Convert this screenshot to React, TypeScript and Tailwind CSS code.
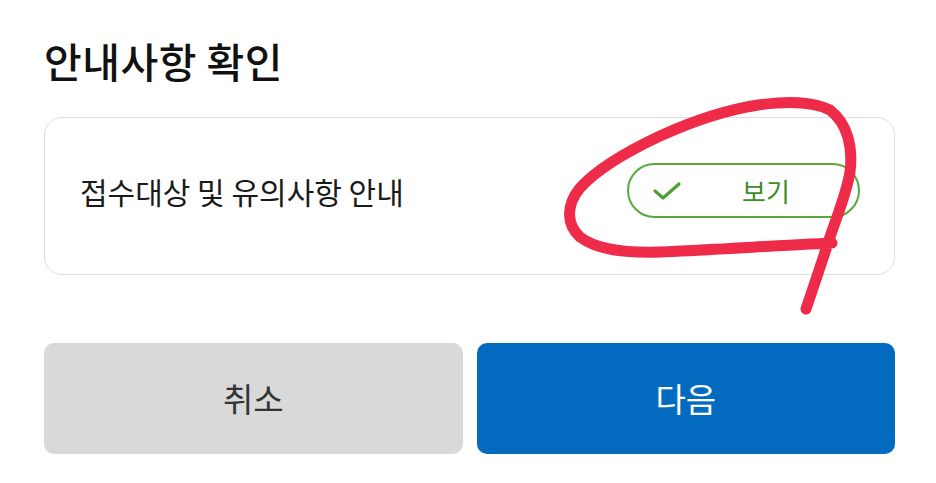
export default function App() {
  return (
    <div
      className="relative w-[936px] h-[483px] bg-white overflow-hidden pl-[44px] pr-[41px]"
      style={{ fontFamily: '"Noto Sans CJK KR", "Noto Sans", sans-serif' }}
    >
      {/* Title */}
      <h1 className="pt-[31px] text-[41px] leading-[58px] font-medium text-[#111111] tracking-[0.5px]">
        안내사항 확인
      </h1>

      {/* Notice card */}
      <div className="mt-[28px] h-[158px] rounded-[18px] border-[1.5px] border-[#d6dee8] flex items-center justify-between pl-[35px] pr-[34px] pb-[11px]">
        <span className="text-[30px] leading-none text-[#1a1a1a]">접수대상 및 유의사항 안내</span>
        <button className="w-[233px] h-[55px] rounded-full border-2 border-[#58a83c] flex items-center pl-[23px] text-[#3d8c2c]">
          <svg width="30" height="20" viewBox="0 0 30 20" fill="none">
            <path
              d="M3 10 L11 17 L27 3"
              stroke="#4aa030"
              strokeWidth="3.2"
              strokeLinecap="round"
              strokeLinejoin="round"
            />
          </svg>
          <span className="ml-[60px] text-[26px] leading-none">보기</span>
        </button>
      </div>

      {/* Actions */}
      <div className="mt-[68px] grid grid-cols-2 gap-[14px]">
        <button className="h-[111px] rounded-[10px] bg-[#d9d9d9] text-[#333333] text-[33px]">
          취소
        </button>
        <button className="h-[111px] rounded-[10px] bg-[#026bc0] text-white text-[33px]">
          다음
        </button>
      </div>

      {/* Hand-drawn annotation */}
      <svg
        className="absolute left-0 top-0 pointer-events-none"
        width="936"
        height="483"
        viewBox="0 0 936 483"
        fill="none"
      >
        <path
          d="M806 309 C814 285 822 262 829 240 C836 218 846 196 850 172 C853 148 848 124 830 110 C812 101 788 101 758 105 C726 110 693 121 660 136 C628 151 598 168 580 188 C566 205 566 224 580 237 C597 250 625 253 660 252 C710 250 770 246 832 243"
          stroke="#ef2b4a"
          strokeWidth="11"
          strokeLinecap="round"
          strokeLinejoin="round"
        />
      </svg>
    </div>
  );
}
